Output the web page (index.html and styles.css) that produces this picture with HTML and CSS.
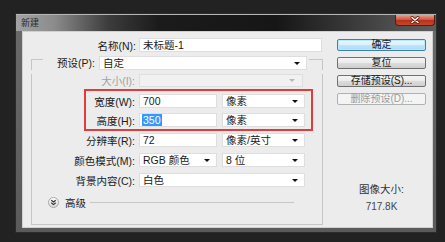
FILE: index.html
```html
<!DOCTYPE html>
<html lang="zh-cn">
<head>
  <meta charset="UTF-8">
  <title>新建</title>
  <link rel="stylesheet" href="styles.css">
</head>
<body>
  <div class="window">
    <div class="titlebar">
      <span class="title">新建</span>
      <span class="close">
        <svg width="38" height="10" viewBox="0 0 38 10">
          <path d="M16 2.5 L22 7.5 M22 2.5 L16 7.5" stroke="#5a1a10" stroke-width="3" stroke-linecap="round"/>
          <path d="M16 2.5 L22 7.5 M22 2.5 L16 7.5" stroke="#ffffff" stroke-width="1.6" stroke-linecap="round"/>
        </svg>
      </span>
    </div>

    <div class="client">
      <div class="form">
        <div class="row name-row">
          <label class="lbl lbl-name">名称(N):</label>
          <div class="field name-field">未标题-1</div>
        </div>

        <div class="group">
          <div class="group-head">
            <span class="edge edge-left"></span>
            <label class="legend">预设(P):</label>
            <div class="field select preset">自定<i class="arrow"></i></div>
            <span class="edge edge-right"></span>
          </div>

          <div class="group-body">
            <div class="row row-size">
              <label class="lbl disabled">大小(I):</label>
              <div class="field select size-field off"><i class="arrow"></i></div>
            </div>

            <div class="mark">
              <div class="row">
                <label class="lbl lbl-short">宽度(W):</label>
                <div class="field num">700</div>
                <div class="field select unit">像素<i class="arrow"></i></div>
              </div>
              <div class="row row-gap">
                <label class="lbl lbl-short">高度(H):</label>
                <div class="field num"><span class="sel">350</span></div>
                <div class="field select unit">像素<i class="arrow"></i></div>
              </div>
            </div>

            <div class="row row-res">
              <label class="lbl">分辨率(R):</label>
              <div class="field num">72</div>
              <div class="field select unit">像素/英寸<i class="arrow"></i></div>
            </div>

            <div class="row row-next">
              <label class="lbl">颜色模式(M):</label>
              <div class="field select num">RGB 颜色<i class="arrow"></i></div>
              <div class="field select unit">8 位<i class="arrow"></i></div>
            </div>

            <div class="row row-next">
              <label class="lbl">背景内容(C):</label>
              <div class="field select bg-field">白色<i class="arrow"></i></div>
            </div>

            <div class="advanced">
              <svg class="expander" width="11" height="11" viewBox="0 0 11 11">
                <defs>
                  <linearGradient id="exp" x1="0" y1="0" x2="0" y2="1">
                    <stop offset="0" stop-color="#ffffff"/>
                    <stop offset="1" stop-color="#d4d4d4"/>
                  </linearGradient>
                </defs>
                <circle cx="5.5" cy="5.5" r="5" fill="url(#exp)" stroke="#a8a8a8"/>
                <path d="M3.3 3.2 L5.5 5 L7.7 3.2 M3.3 5.8 L5.5 7.6 L7.7 5.8" fill="none" stroke="#333" stroke-width="1.1"/>
              </svg>
              <span class="adv-text">高级</span>
              <span class="adv-line"></span>
            </div>
          </div>
        </div>
      </div>

      <div class="side">
        <button class="btn btn-default">确定</button>
        <button class="btn">复位</button>
        <button class="btn">存储预设(S)...</button>
        <button class="btn" disabled>删除预设(D)...</button>

        <div class="info">
          <div class="info-label">图像大小:</div>
          <div class="info-value">717.8K</div>
        </div>
      </div>
    </div>
  </div>
</body>
</html>
```

FILE: styles.css
```css
body {
  margin: 0;
  background-color: #222222;
  font-family: "Liberation Sans", "Noto Sans CJK SC", sans-serif;
  font-size: 10.5px;
  color: #1a1a1a;
  width: 445px;
  height: 242px;
  overflow: hidden;
}

.window {
  box-sizing: border-box;
  margin: 13px 0 0 15px;
  width: 422px;
  height: 220px;
  border: 1px solid #2c2c2c;
  background: linear-gradient(to bottom, #6a6a6a, #5a5a5a);
  padding: 0 3px 4px 6px;
}

/* barra de titulo escura */
.titlebar {
  display: flex;
  justify-content: space-between;
  align-items: flex-start;
  height: 17px;
  margin: 0 -3px 0 -6px;
  border-top: 1px solid #b5b5b5;
  box-sizing: border-box;
  background: linear-gradient(to right, #a2a2a2 0, #8c8c8c 9%, #3c3c3c 22%, #1b1b1b 34%, #161616 62%, #323232 76%, #525252 92%, #5c5c5c 100%);
}

.title {
  padding: 3px 0 0 5px;
  font-size: 9px;
  line-height: 11px;
  color: #2a2a2a;
}

.close {
  display: block;
  width: 38px;
  height: 10px;
  margin: 0 1px 0 0;
  border: 1px solid #5a1a10;
  border-top: none;
  border-radius: 0 0 4px 4px;
  background: linear-gradient(to bottom, #e9a08e 0, #d05a42 45%, #b8321c 55%, #c8462c 100%);
}

.close svg {
  display: block;
}

.client {
  display: flex;
  height: 197px;
  background-color: #ececec;
  box-shadow: inset 0 0 0 1px #d0d0d0;
}

.form {
  width: 300px;
}

.row {
  display: flex;
  align-items: center;
  height: 14px;
}

.lbl {
  width: 103px;
  margin-right: 4px;
  text-align: right;
  white-space: nowrap;
}

.lbl.disabled {
  color: #a2a2a2;
}

.name-row {
  margin-top: 7px;
}

.lbl-name {
  width: 114px;
  margin-right: 3px;
}

.field {
  position: relative;
  box-sizing: border-box;
  height: 14px;
  line-height: 13px;
  padding-left: 3px;
  background-color: #ffffff;
  border: 1px solid #dedede;
  white-space: nowrap;
}

.name-field {
  width: 183px;
}

.select .arrow {
  position: absolute;
  right: 6px;
  top: 5px;
  width: 0;
  height: 0;
  border-left: 3px solid transparent;
  border-right: 3px solid transparent;
  border-top: 3px solid #111111;
}

.off {
  background-color: #f1f1f1;
}

.off .arrow {
  border-top-color: #b8b8b8;
}

/* grupo de predefinicoes */
.group {
  margin: 4px 0 0 9px;
  width: 292px;
}

.group-head {
  display: flex;
  height: 14px;
}

.edge {
  margin-top: 3px;
  border-top: 1px solid #c6c6c6;
}

.edge-left {
  width: 11px;
  border-left: 1px solid #c6c6c6;
}

.edge-right {
  flex: 1;
  margin-left: 2px;
  border-right: 1px solid #c6c6c6;
}

.legend {
  width: 56px;
  padding-right: 4px;
  box-sizing: border-box;
  text-align: right;
  line-height: 14px;
  white-space: nowrap;
}

.preset {
  width: 208px;
}

.group-body {
  height: 151px;
  box-sizing: border-box;
  border: 1px solid #c6c6c6;
  border-top: none;
}

.row-size {
  margin-top: 4px;
  height: 13px;
}

.size-field {
  width: 164px;
  height: 13px;
}

.size-field .arrow {
  top: 4px;
  right: 7px;
}

/* destaque vermelho */
.mark {
  margin: 2px 0 0 52px;
  width: 229px;
  height: 42px;
  box-sizing: border-box;
  border: 2px solid #e23b3b;
  padding-top: 3px;
}

.lbl-short {
  width: 49px;
}

.row-gap {
  margin-top: 5px;
}

.num {
  width: 78px;
}

.unit {
  width: 83px;
  margin-left: 5px;
}

.sel {
  background-color: #3399ff;
  color: #ffffff;
  padding: 0 1px;
  margin-left: -1px;
}

.row-res {
  margin-top: 2px;
}

.row-next {
  margin-top: 6px;
}

.bg-field {
  width: 166px;
}

.advanced {
  display: flex;
  align-items: center;
  height: 14px;
  margin-top: 8px;
  padding-left: 16px;
}

.expander {
  display: block;
}

.adv-text {
  margin-left: 6px;
}

.adv-line {
  flex: 1;
  margin: 0 28px 0 4px;
  border-top: 1px solid #c6c6c6;
}

/* botoes da direita */
.side {
  display: flex;
  flex-direction: column;
  margin-left: 15px;
  padding-top: 8px;
  width: 89px;
}

.btn {
  height: 12px;
  margin-bottom: 6px;
  padding: 0;
  font-family: inherit;
  font-size: 10px;
  line-height: 10px;
  color: #1a1a1a;
  border: 1px solid #707070;
  border-radius: 2px;
  background: linear-gradient(to bottom, #f4f4f4 0, #ebebeb 50%, #dcdcdc 51%, #cfcfcf 100%);
}

.btn-default {
  border-color: #3c7fb1;
  background: linear-gradient(to bottom, #eaf6fd 0, #d9f0fc 50%, #bee6fd 51%, #a7d9f5 100%);
  box-shadow: inset 0 0 0 1px #bde8fb;
}

.btn:disabled {
  border-color: #adb2b5;
  background: #f4f4f4;
  color: #9a9a9a;
}

.info {
  margin-top: 70px;
  text-align: center;
  color: #333333;
}

.info-value {
  margin-top: 5px;
  font-size: 10px;
  color: #444444;
}
```
